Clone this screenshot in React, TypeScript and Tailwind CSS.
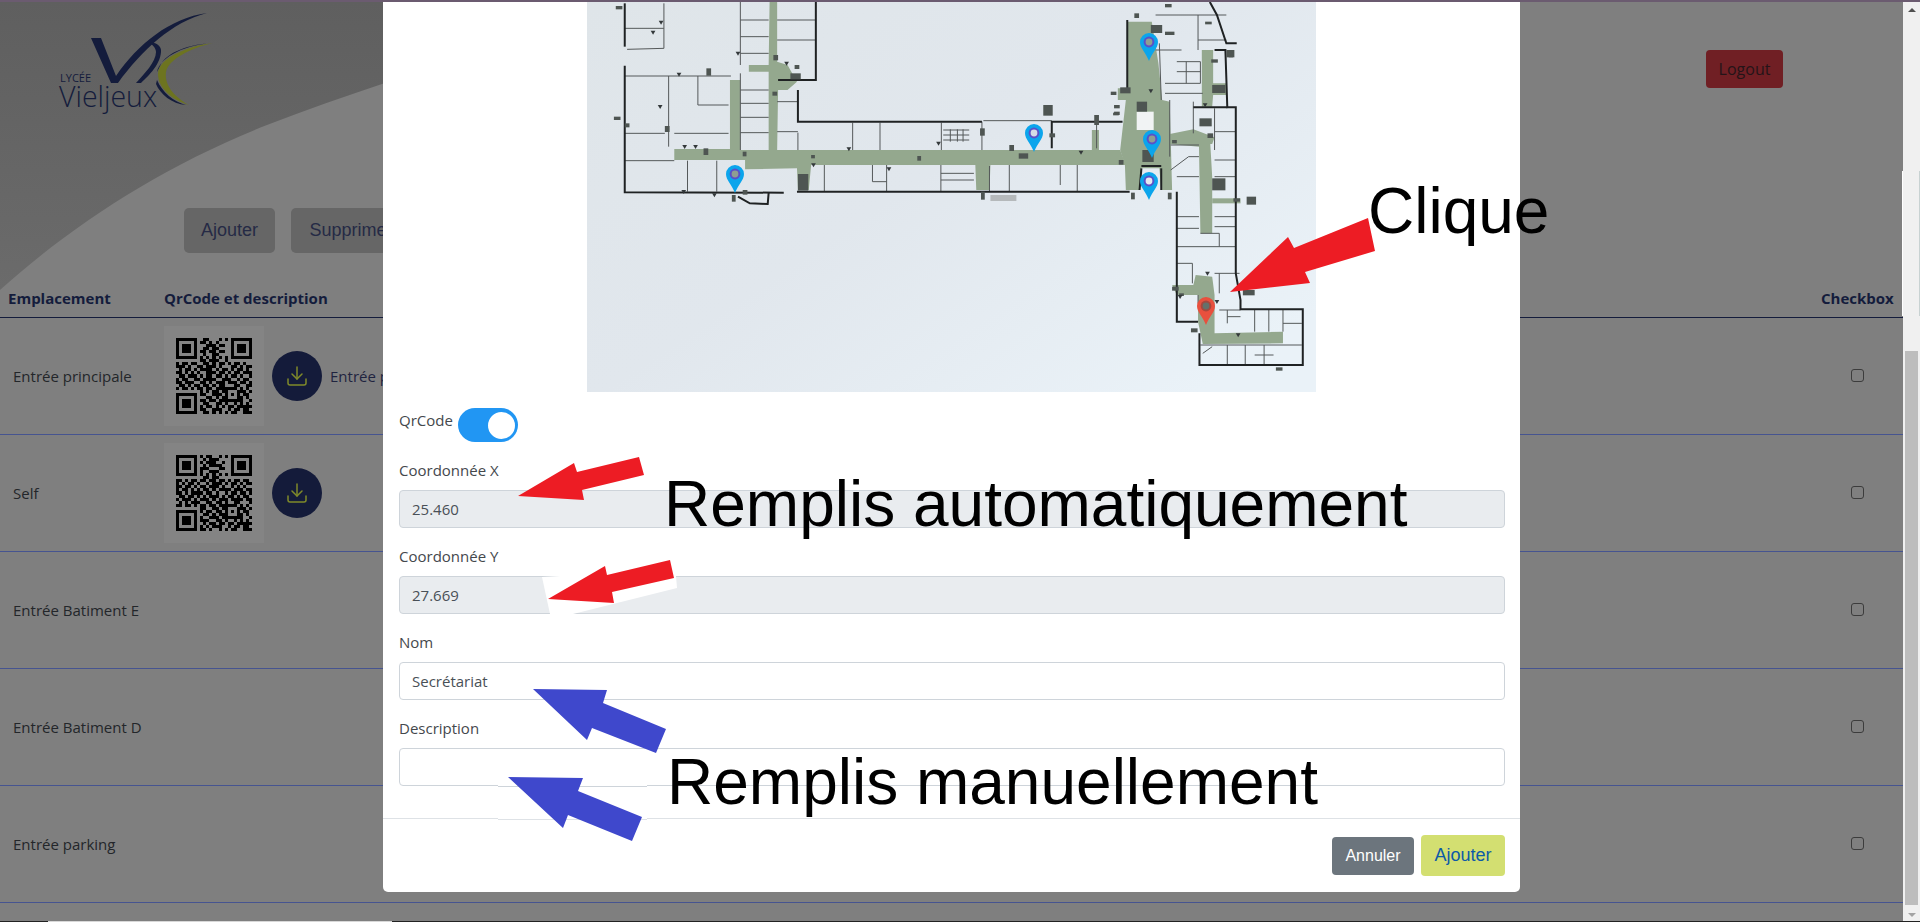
import React from 'react';
import { Download } from 'lucide-react';

const QR_ONE = [
  '1111111001100010101111111',
  '1000001011010100001000001',
  '1011101000111011001011101',
  '1011101001101100001011101',
  '1011101011011011001011101',
  '1000001001001100001000001',
  '1111111010101010101111111',
  '0000000011011100100000000',
  '1011011001101011010110100',
  '1110100110111010001101011',
  '0101101011110101101011010',
  '1101010100111011010110111',
  '0110111010110110101101001',
  '1011001101111001110010110',
  '1101110011010111011101101',
  '0110101101101011000110011',
  '1011010110110111111101010',
  '0000000010101101100011101',
  '1111111011001110101010110',
  '1000001000110101100011010',
  '1011101011011011111111001',
  '1011101001100110100101010',
  '1011101010110101011011111',
  '1000001011001110010110110',
  '1111111001101010101100111',
];

const QR_TWO = [
  '1111111010110010101111111',
  '1000001001011100001000001',
  '1011101010111001001011101',
  '1011101001011110001011101',
  '1011101011100011001011101',
  '1000001010011100001000001',
  '1111111010101010101111111',
  '0000000001101100000000000',
  '1101011011011011010110110',
  '1010110100101110101101011',
  '1101101011011101001010100',
  '1011010101101011110111011',
  '1101011110110100101101101',
  '0110110101011101011010110',
  '1011101011101011101111011',
  '0101011100110110100110001',
  '1101101011011011111101010',
  '0000000011001101100011101',
  '1111111010110110101010110',
  '1000001001101011100011010',
  '1011101010011101111111001',
  '1011101011100110100101010',
  '1011101001011011011011111',
  '1000001010101110010110110',
  '1111111011010010101100111',
];

const ROWS = [
  { name: 'Entrée principale', qr: QR_ONE, description: 'Entrée principale' },
  { name: 'Self', qr: QR_TWO, description: '' },
  { name: 'Entrée Batiment E' },
  { name: 'Entrée Batiment D' },
  { name: 'Entrée parking' },
];

const GREEN_AREAS = [
  '200,447 318,447 318,240 340,240 340,450 400,450 400,215 358,215 358,195 400,195 402,6 418,6 418,185 440,195 460,245 440,270 420,270 418,450 1145,450 1157,495 870,495 868,570 840,570 838,495 490,495 485,570 462,570 460,505 350,508 350,480 200,480',
  '1160,65 1212,65 1226,190 1234,300 1250,305 1255,570 1232,570 1228,505 1190,505 1185,570 1157,570 1155,495 1145,450 1157,300 1140,300 1140,265 1160,265',
  '1250,402 1300,388 1345,412 1340,432 1336,432 1340,530 1340,700 1315,700 1312,440 1250,432',
  '1318,150 1342,150 1342,250 1370,250 1370,285 1342,285 1340,320 1318,320',
  '1340,595 1400,595 1400,610 1340,610',
  '1255,855 1300,855 1305,825 1340,830 1345,885 1345,1000 1490,995 1490,1030 1320,1032 1310,965 1310,885 1265,885',
  '1085,390 1100,390 1100,450 1085,450',
];

const HEAVY_WALLS = [
  '95,10 95,140',
  '95,197 95,577 432,578',
  '335,590 360,610 398,612 400,578',
  '500,6 500,240 420,240',
  '462,270 462,365 852,365',
  '1000,445 1000,365 1150,365',
  '460,575 1165,575',
  '1160,60 1160,270',
  '1345,150 1368,150 1372,322 1390,322 1390,820 1400,900 1400,928 1532,928 1532,1095 1313,1095 1313,1000',
  '1335,6 1350,45 1370,130 1392,130',
  '1265,575 1265,965 1310,965',
  '1232,505 1232,570',
  '1190,505 1186,570',
  '1190,498 1232,498',
  '1300,322 1372,322',
];

const THIN_WALLS = [
  '95,85 178,85',
  '178,10 178,145 100,148',
  '95,228 320,228',
  '188,228 188,440',
  '250,228 250,315',
  '95,400 180,400',
  '200,400 315,400',
  '250,315 315,315',
  '95,482 200,482',
  '228,482 228,575',
  '290,482 290,575',
  '340,6 340,195',
  '340,60 400,60',
  '340,110 400,110',
  '340,160 400,160',
  '340,220 340,450',
  '340,270 400,270',
  '340,310 400,310',
  '340,352 400,352',
  '340,398 400,398',
  '418,60 500,60',
  '418,120 500,120',
  '418,305 462,305',
  '418,395 462,395',
  '462,398 462,450',
  '578,368 578,450',
  '636,368 636,450',
  '766,368 766,450',
  '852,365 852,450',
  '770,390 825,390',
  '770,405 825,405',
  '770,420 825,420',
  '785,388 785,425',
  '800,388 800,425',
  '812,388 812,425',
  '518,495 518,575',
  '620,495 620,545 650,545',
  '650,495 650,575',
  '765,495 765,575',
  '765,520 835,520',
  '765,540 835,540',
  '868,498 868,575',
  '910,495 910,575',
  '1018,495 1018,555',
  '1054,495 1054,575',
  '1095,370 1095,445',
  '855,362 1000,362',
  '1228,130 1232,300',
  '1220,150 1275,150',
  '1265,185 1315,185 1315,250',
  '1285,185 1285,250',
  '1265,215 1315,215',
  '1240,250 1315,250',
  '1240,280 1320,280',
  '1310,45 1310,150',
  '1220,45 1370,45',
  '1310,120 1370,120',
  '1250,300 1250,470',
  '1300,305 1300,400',
  '1345,325 1345,450',
  '1345,395 1390,395',
  '1345,480 1390,480',
  '1345,530 1390,530',
  '1252,435 1312,435',
  '1252,510 1290,470 1312,470',
  '1265,530 1312,530',
  '1265,650 1312,650',
  '1265,685 1312,685',
  '1265,740 1390,740',
  '1315,700 1355,700 1355,740',
  '1345,650 1390,650',
  '1345,680 1390,680',
  '1265,790 1298,790 1298,850',
  '1345,820 1398,820',
  '1355,820 1355,880',
  '1355,930 1400,930',
  '1372,930 1372,970',
  '1372,950 1400,950',
  '1430,930 1430,995',
  '1490,930 1490,995',
  '1460,930 1460,995',
  '1490,970 1530,970',
  '1315,1035 1530,1035',
  '1372,1035 1372,1095',
  '1410,1035 1410,1095',
  '1450,1035 1450,1095',
  '1430,1065 1470,1065',
  '1340,1040 1320,1060',
  '1265,885 1265,965',
  '1310,885 1310,910',
];

const BLOCKS = [
  [268, 205, 10, 22], [982, 315, 20, 32], [1413, 590, 20, 24], [462, 522, 22, 50], [1180, 305, 22, 30], [1192, 450, 24, 36],
  [1340, 535, 28, 36], [1340, 255, 28, 24], [1313, 355, 26, 24], [1405, 870, 25, 16], [446, 220, 22, 18], [1145, 262, 22, 18],
  [76, 18, 14, 10], [72, 350, 14, 10], [322, 585, 8, 20], [850, 575, 8, 24], [1168, 578, 8, 20], [1246, 578, 8, 20], [1295, 985, 14, 12],
  [1475, 1102, 14, 10], [1370, 150, 14, 22], [930, 460, 20, 16], [1255, 860, 14, 12], [1125, 275, 12, 10], [1132, 315, 12, 10], [1132, 335, 12, 10],
  [1130, 338, 12, 8], [262, 445, 10, 20], [180, 378, 10, 18], [345, 455, 8, 14], [490, 465, 8, 10], [715, 468, 8, 14], [910, 435, 10, 18],
  [1090, 345, 10, 30], [1142, 480, 10, 14], [455, 195, 10, 12], [410, 165, 10, 16], [408, 275, 10, 12], [95, 370, 10, 12], [848, 385, 10, 22],
  [345, 570, 10, 14], [995, 400, 12, 12], [1255, 420, 10, 10], [1330, 400, 12, 14], [1270, 880, 10, 8], [1240, 12, 14, 10], [1175, 40, 10, 14],
  [1210, 75, 24, 24], [1240, 95, 20, 10], [1325, 65, 14, 8], [1338, 178, 14, 10], [1375, 150, 12, 22], [1385, 595, 14, 10],
];

// small triangles the plan uses for its extinguisher marks
const MARKS = [
  [172, 62], [155, 92], [210, 218], [170, 315], [222, 435], [245, 435], [220, 570], [285, 580], [438, 185], [495, 490], [655, 502],
  [1062, 452], [1210, 268], [1325, 310], [1330, 815], [1350, 900], [1395, 1000], [570, 442], [760, 425], [335, 155], [1272, 885],
];

// the plan image, in coordinates stretched to the crop it was read from
const FloorPlan = () => (
  <svg width="729" height="390" viewBox="15 6 1545 1170" preserveAspectRatio="none" className="block blur-[0.4px]">
    <defs>
      <linearGradient id="planBg" x1="0" y1="0" x2="1" y2="0.8">
        <stop offset="0" stopColor="#dfe5e9" />
        <stop offset="0.5" stopColor="#e1e7ed" />
        <stop offset="1" stopColor="#eaf2f8" />
      </linearGradient>
    </defs>
    <rect x="15" y="6" width="1545" height="1170" fill="url(#planBg)" />
    {GREEN_AREAS.map((p) => (
      <polygon key={p} points={p} fill="#94a88e" />
    ))}
    <rect x="1180" y="335" width="36" height="55" fill="#f1f3f4" />
    <rect x="870" y="585" width="55" height="18" fill="#b5b9bb" />
    {THIN_WALLS.map((p) => (
      <polyline key={p} points={p} fill="none" stroke="#55595a" strokeWidth="1" vectorEffect="non-scaling-stroke" />
    ))}
    {HEAVY_WALLS.map((p) => (
      <polyline key={p} points={p} fill="none" stroke="#1f2223" strokeWidth="2" vectorEffect="non-scaling-stroke" />
    ))}
    {BLOCKS.map(([x, y, w, h]) => (
      <rect key={`${x}-${y}`} x={x} y={y} width={w} height={h} fill="#4e5552" />
    ))}
    {MARKS.map(([x, y]) => (
      <polygon key={`${x}-${y}`} points={`${x - 5},${y} ${x + 5},${y} ${x},${y + 12}`} fill="#33383a" />
    ))}
  </svg>
);

const Pin = ({ x, y, color, ring, dot }: { x: number; y: number; color: string; ring: string; dot: string }) => (
  <svg x={x - 9} y={y - 27} width="18" height="28" viewBox="0 0 18 28">
    <path d="M9 28C6 20 0 15 0 9a9 9 0 0 1 18 0c0 6-6 11-9 19z" fill={color} />
    <circle cx="9" cy="9" r="5.4" fill={ring} />
    <circle cx="9" cy="9" r="3.4" fill={dot} />
  </svg>
);

// x and y are the tip of each marker on the page
const PINS = [
  { x: 735, y: 192, color: '#0ba5ec', ring: '#5a50c8', dot: '#8f9e92' },
  { x: 1034, y: 151, color: '#0ba5ec', ring: '#5a50c8', dot: '#d5dbe6' },
  { x: 1149, y: 60, color: '#0ba5ec', ring: '#5a50c8', dot: '#8f9e92' },
  { x: 1152, y: 157, color: '#0ba5ec', ring: '#5a50c8', dot: '#8f9e92' },
  { x: 1149, y: 199, color: '#0ba5ec', ring: '#5a50c8', dot: '#e4e8f0' },
  { x: 1206, y: 324, color: '#e8503e', ring: '#a5483e', dot: '#66706a' },
];

const Qr = ({ rows }: { rows: string[] }) => (
  <svg width="76" height="76" viewBox="0 0 25 25" shapeRendering="crispEdges">
    {rows.map((row, y) =>
      row.split('').map((cell, x) => (cell === '1' ? <rect key={`${x}-${y}`} x={x} y={y} width="1" height="1" fill="#000" /> : null)),
    )}
  </svg>
);

const Logo = () => (
  <div className="relative h-[112px] w-[160px]">
    <svg width="160" height="112" viewBox="0 0 160 112" className="absolute left-0 top-[-2px]">
      <path d="M31 38 L41 38 L56 76 C78 44 110 18 147 13 C112 22 82 50 58 83 L51 83 Z" fill="#141c3c" />
      <path d="M88 42 C96 42 102 46 101 52 C100 66 86 78 81 83 L76 83 C84 74 96 62 96 52 C96 48 92 44 88 42 Z" fill="#141c3c" />
      <path d="M153 43 C128 46 98 58 98 74 C98 88 112 100 129 105 C116 98 104 86 106 72 C108 60 130 48 153 43 Z" fill="#6d7420" />
      <path d="M153 43 C130 44 106 52 100 66 L97 72 C100 56 128 44 153 43 Z" fill="#141c3c" />
      <path d="M97 80 C102 92 114 102 126 105 C112 104 100 94 96 84 Z" fill="#141c3c" />
    </svg>
    <span className="absolute left-0 top-[70px] font-['Open_Sans',sans-serif] text-[11px] leading-none text-[#141c3c]">LYCÉE</span>
    <span className="absolute left-[-1px] top-[84px] font-['Open_Sans',sans-serif] text-[28.5px] font-light leading-[20px] text-[#141c3c]">Vieljeux</span>
  </div>
);

const Field = ({ label, value, disabled }: { label: string; value: string; disabled?: boolean }) => (
  <div className="flex flex-col">
    <label className="mb-[10px] h-[20px] text-[15px] leading-[20px] text-[#44484c]">{label}</label>
    <div
      className={`flex h-[38px] items-center rounded-[4px] border border-[#ced4da] px-[12px] text-[15px] text-[#495057] ${
        disabled ? 'bg-[#e9ecef]' : 'bg-white'
      }`}
    >
      {value}
    </div>
  </div>
);

const Arrow = ({ points, color }: { points: string; color: string }) => <polygon points={points} fill={color} />;

const Note = ({ className, children }: { className: string; children: React.ReactNode }) => (
  <span className={`absolute whitespace-nowrap font-['Liberation_Sans',Arial,sans-serif] text-[64px] leading-none text-black ${className}`}>
    {children}
  </span>
);

export default function App() {
  return (
    <div className="relative flex h-[922px] w-[1920px] flex-col overflow-hidden bg-[#7f7f7f] font-['Open_Sans',sans-serif]">
      <div className="h-[2px] shrink-0 bg-[#6b5b70]" />

      <div className="flex min-h-0 flex-1">
        <main className="relative flex w-[1903px] flex-col">
          <svg width="700" height="300" viewBox="0 0 700 300" className="absolute left-0 top-0">
            <defs>
              <linearGradient id="swoosh" x1="0" y1="0" x2="0" y2="1">
                <stop offset="0" stopColor="#5f5f5f" />
                <stop offset="1" stopColor="#6b6b6b" />
              </linearGradient>
            </defs>
            <path d="M0 0H700C540 30 400 72 267 123C160 165 70 225 0 288Z" fill="url(#swoosh)" />
          </svg>

          <header className="relative flex h-[118px] items-start justify-between pl-[60px] pr-[120px]">
            <Logo />
            <button className="mt-[48px] h-[38px] w-[77px] rounded-[4px] bg-[#701f24] text-[16px] text-[#241418]">Logout</button>
          </header>

          <div className="relative mt-[88px] flex gap-[16px] pl-[184px]">
            <button className="h-[45px] w-[91px] rounded-[5px] bg-[#666666] font-['Liberation_Sans',sans-serif] text-[18px] text-[#252a45]">Ajouter</button>
            <button className="h-[45px] w-[120px] rounded-[5px] bg-[#666666] font-['Liberation_Sans',sans-serif] text-[18px] text-[#252a45]">Supprimer</button>
          </div>

          <div className="relative mt-[33px] flex h-[32px] items-start border-b border-[#141c3c] pt-[1px] text-[15px] font-bold text-[#141c3c]">
            <div className="w-[164px] pl-[8px]">Emplacement</div>
            <div className="flex-1">QrCode et description</div>
            <div className="w-[82px]">Checkbox</div>
          </div>

          {ROWS.map((row) => (
            <div key={row.name} className="relative flex h-[117px] shrink-0 items-center border-b border-[#465490] text-[15px] text-[#23262a]">
              <div className="w-[164px] pl-[13px]">{row.name}</div>
              <div className="flex flex-1 items-center">
                {row.qr && (
                  <>
                    <div className="flex h-[100px] w-[100px] items-center justify-center bg-[#848484]">
                      <Qr rows={row.qr} />
                    </div>
                    <div className="ml-[8px] flex h-[50px] w-[50px] items-center justify-center rounded-full bg-[#141b3a] text-[#7f8a2a]">
                      <Download size={24} strokeWidth={1.5} />
                    </div>
                    <span className="ml-[8px] text-[#1f2440]">{row.description}</span>
                  </>
                )}
              </div>
              <div className="flex w-[82px] justify-center pr-[9px]">
                <div className="mb-[1px] h-[13px] w-[13px] rounded-[3px] border border-[#3c3c3c]" />
              </div>
            </div>
          ))}
        </main>

        <aside className="flex w-[17px] flex-col items-center bg-[#f0f0f0] pt-[6px]">
          <div className="h-0 w-0 border-x-[4px] border-b-[4px] border-x-transparent border-b-[#505050]" />
          <div className="mt-[339px] h-[554px] w-[13px] bg-[#bdbdbd]" />
          <div className="mt-[8px] h-0 w-0 border-x-[4px] border-t-[4px] border-x-transparent border-t-[#a3a3a3]" />
        </aside>
      </div>

      <div className="flex h-[1px] shrink-0">
        <div className="w-[48px] bg-[#222222]" />
        <div className="w-[344px] bg-[#d8d8d8]" />
        <div className="flex-1 bg-[#222222]" />
      </div>

      {/* slivers of the pasted plan image showing at the page edge */}
      <div className="absolute left-[1902px] top-[171px] h-[145px] w-[1px] bg-white" />
      <div className="absolute left-[1919px] top-[171px] h-[145px] w-[1px] bg-[#c8d2d2]" />

      {/* add-point dialog, open over the page */}
      <div className="absolute left-[383px] top-[2px] flex h-[890px] w-[1137px] flex-col rounded-b-[5px] bg-white">
        <div className="flex justify-start pl-[204px]">
          <FloorPlan />
        </div>
        <div className="flex flex-1 flex-col pl-[16px] pr-[15px]">
          <div className="mt-[16px] flex h-[34px] items-center gap-[4px]">
            <span className="mt-[-10px] w-[55px] text-[15px] text-[#44484c]">QrCode</span>
            <div className="flex h-[34px] w-[60px] items-center justify-end rounded-full bg-[#2196f3] pr-[3px]">
              <div className="h-[27px] w-[27px] rounded-full bg-white" />
            </div>
          </div>
          <div className="mt-[18px] flex flex-col gap-[18px]">
            <Field label="Coordonnée X" value="25.460" disabled />
            <Field label="Coordonnée Y" value="27.669" disabled />
            <Field label="Nom" value="Secrétariat" />
            <Field label="Description" value="" />
          </div>
        </div>
        <div className="flex h-[74px] items-center justify-end gap-[7px] border-t border-[#dee2e6] px-[15px]">
          <button className="h-[38px] w-[82px] rounded-[4px] bg-[#6c757d] font-['Liberation_Sans',sans-serif] text-[16px] text-white">Annuler</button>
          <button className="h-[41px] w-[84px] rounded-[4px] bg-[#d3df71] font-['Liberation_Sans',sans-serif] text-[18px] text-[#0d5aa7]">Ajouter</button>
        </div>
      </div>

      {/* markers and hand-drawn arrows pasted over the screenshot */}
      <svg width="1920" height="922" viewBox="0 0 1920 922" className="pointer-events-none absolute left-0 top-0">
        {PINS.map((pin) => (
          <Pin key={`${pin.x}-${pin.y}`} {...pin} />
        ))}
        <polygon points="542,577 560,576 676,576 677,588 573,614 550,614" fill="#ffffff" />
        <rect x="498" y="785" width="149" height="1" fill="#ffffff" />
        <rect x="498" y="786" width="149" height="1" fill="#ced4da" />
        <rect x="498" y="818" width="149" height="1" fill="#ffffff" />
        <rect x="498" y="819" width="149" height="1" fill="#dee2e6" />
        <Arrow points="1230,292 1288,237 1294,248 1368,218 1375,251 1305,272 1310,283" color="#ed1c24" />
        <Arrow points="518,496 574,463 577,472 639,457 644,475 582,490 584,500" color="#ed1c24" />
        <Arrow points="548,599 605,566 607,575 670,560 674,578 612,592 614,603" color="#ed1c24" />
        <Arrow points="533,689 607,690 603,703 666,729 656,753 592,728 587,740" color="#3f48cc" />
        <Arrow points="508,777 583,778 578,791 642,817 632,841 568,815 563,828" color="#3f48cc" />
      </svg>
      <Note className="left-[1368px] top-[179px]">Clique</Note>
      <Note className="left-[664px] top-[472px]">Remplis automatiquement</Note>
      <Note className="left-[667px] top-[750px]">Remplis manuellement</Note>
    </div>
  );
}
